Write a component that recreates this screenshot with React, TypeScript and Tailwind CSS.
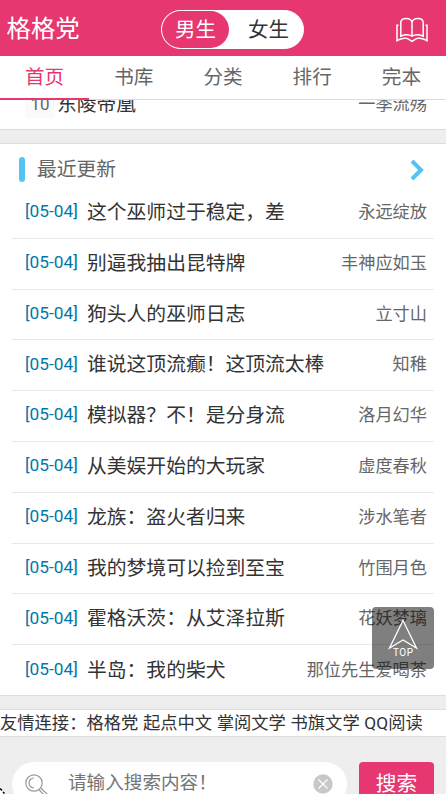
const books = [
  ['这个巫师过于稳定，差', '永远绽放'],
  ['别逼我抽出昆特牌', '丰神应如玉'],
  ['狗头人的巫师日志', '立寸山'],
  ['谁说这顶流癫！这顶流太棒', '知稚'],
  ['模拟器？不！是分身流', '洛月幻华'],
  ['从美娱开始的大玩家', '虚度春秋'],
  ['龙族：盗火者归来', '涉水笔者'],
  ['我的梦境可以捡到至宝', '竹围月色'],
  ['霍格沃茨：从艾泽拉斯', '花妖梦璃'],
  ['半岛：我的柴犬', '那位先生爱喝茶'],
];

const tabs = ['首页', '书库', '分类', '排行', '完本'];

function Header() {
  return (
    <header className="flex h-14 shrink-0 items-center justify-between bg-[#e63770] pr-[18px] pl-[6.5px] text-white">
      <h1 className="w-[154.5px] pt-[2px] text-[24.4px] leading-[54px]">格格党</h1>
      <div className="mt-[2px] flex h-[39px] w-[143px] overflow-hidden rounded-full border border-white bg-white text-[20.5px] leading-[39px]">
        <span className="w-[67px] rounded-r-full bg-[#e63770] text-center">男生</span>
        <span className="flex-1 pl-[19px] text-[#333]">女生</span>
      </div>
      <div className="flex w-[124px] justify-end">
        <svg className="mt-[3px] h-[26px] w-8" viewBox="0 0 32 26" fill="none" stroke="white" strokeWidth="1.5">
          <path d="M16 5.5C15.4 2.5 13 1.6 10 1.6C7 1.6 5.2 3 4.8 5V19.2C9 17.4 13 17.4 16 19.2C19 17.4 23 17.4 27.2 19.2V5C26.8 3 25 1.6 22 1.6C19 1.6 16.6 2.5 16 5.5V19" />
          <path d="M2.5 8.2H1V23.7C6 20.5 11.5 20.5 13.2 22.6L16 24.4L18.8 22.6C20.5 20.5 26 20.5 31 23.7V8.2H29.5" />
        </svg>
      </div>
    </header>
  );
}

function Top() {
  return (
    <div className="absolute top-[607px] left-[372px] h-[62px] w-[62px] rounded-[4px] bg-black/50">
      <svg className="h-[62px] w-[62px]" viewBox="0 0 62 62" fill="none" stroke="white" strokeWidth="1.3">
        <path d="M31 13.5L44.5 41L31 33L17.5 41Z" />
        <text x="31.3" y="49" fill="white" stroke="none" fontSize="10" letterSpacing="0.5" textAnchor="middle" fontFamily="Roboto, sans-serif">TOP</text>
      </svg>
    </div>
  );
}

export default function App() {
  return (
    <div className="relative flex h-[794px] w-[446px] flex-col overflow-hidden bg-[#eee] font-[Roboto,'Noto_Sans_CJK_SC',sans-serif] text-[#333]">
      <Header />
      <nav className="flex h-11 shrink-0 border-b border-[#ddd] bg-white text-[19.6px] text-[#666]">
        {tabs.map((t, i) => (
          <a key={t} className={i === 0 ? 'h-11 flex-1 border-b-2 border-[#e63770] text-center leading-[44px] text-[#e63770]' : 'flex-1 text-center leading-[44px]'}>{t}</a>
        ))}
      </nav>
      <section className="flex h-[30px] shrink-0 items-end overflow-hidden border-b border-[#ddd] bg-white pr-[19px] pl-[25px]">
        <div className="flex h-[48px] w-full items-center">
          <span className="mr-[2px] h-[26px] w-[30px] bg-[#fafafa] text-center text-[17px] leading-[25px] text-[#666]">10</span>
          <span className="flex-1 text-[19.8px]">东陵帝凰</span>
          <span className="text-[17.2px] text-[#666]">一季流殇</span>
        </div>
      </section>
      <section className="mt-[13px] h-[553px] shrink-0 overflow-hidden border-y border-[#ddd] bg-white">
        <div className="flex h-[44px] items-center pt-[7px] pr-[22.5px] pl-[18.5px]">
          <i className="mr-3 h-[25px] w-[6.5px] rounded-[3px] bg-[#53c3f3]" />
          <h2 className="flex-1 text-[19.8px] leading-[28px] text-[#666]">最近更新</h2>
          <svg className="h-[22px] w-[14px]" viewBox="0 0 14 22" fill="none" stroke="#53c3f3" strokeWidth="4">
            <path d="M2 2L11 11L2 20" />
          </svg>
        </div>
        <ul className="mx-3">
          {books.map(([title, author]) => (
            <li key={title} className="flex h-[50.8px] items-center border-b border-[#e8e8e8] pr-[7px] pl-[13px] last:border-0">
              <span className="w-[62px] pb-[1.5px] text-[17.3px] text-[#0078aa]">[05-04]</span>
              <span className="flex-1 text-[19.8px]">{title}</span>
              <span className="text-[17.2px] text-[#666]">{author}</span>
            </li>
          ))}
        </ul>
      </section>
      <div className="mt-[13px] h-7 shrink-0 border-y border-[#ddd] bg-white text-[17.3px] leading-[27px] [word-spacing:0.4px] whitespace-nowrap">
        友情连接：格格党 起点中文 掌阅文学 书旗文学 QQ阅读
      </div>
      <form className="mt-[25px] flex shrink-0 px-3">
        <div className="flex h-[44px] w-[335px] items-center rounded-full bg-white pr-[14px] pl-[13px]">
          <svg className="mt-[4px] h-6 w-6" viewBox="0 0 24 24" fill="none" stroke="#999" strokeWidth="1.2">
            <circle cx="9" cy="9" r="8.2" />
            <path d="M9 4A5 5 0 0 0 9 14M14.2 16L21 23M16 14.2L23 21M21 23L23 21" />
          </svg>
          <span className="ml-[19px] flex-1 pb-[2px] text-[18.6px] leading-[40px] text-[#757575]">请输入搜索内容！</span>
          <svg className="h-5 w-5" viewBox="0 0 20 20" stroke="white" strokeWidth="1.2">
            <circle cx="10" cy="10" r="9.7" fill="#c8c8c8" stroke="none" />
            <path d="M5.5 5.5L14.5 14.5M14.5 5.5L5.5 14.5" />
          </svg>
        </div>
        <button type="button" className="ml-3 h-[44px] w-[75px] rounded-[4px] bg-[#e63770] text-[20.7px] leading-[44px] text-white">搜索</button>
      </form>
      <Top />
      <svg className="absolute bottom-0 left-0 h-2 w-2" viewBox="0 0 8 8">
        <path d="M0 3L5 8H0Z" fill="white" />
        <path d="M0 2.5L2 4.5M3 6L4.5 7.5" stroke="black" strokeWidth="1.5" />
      </svg>
    </div>
  );
}
